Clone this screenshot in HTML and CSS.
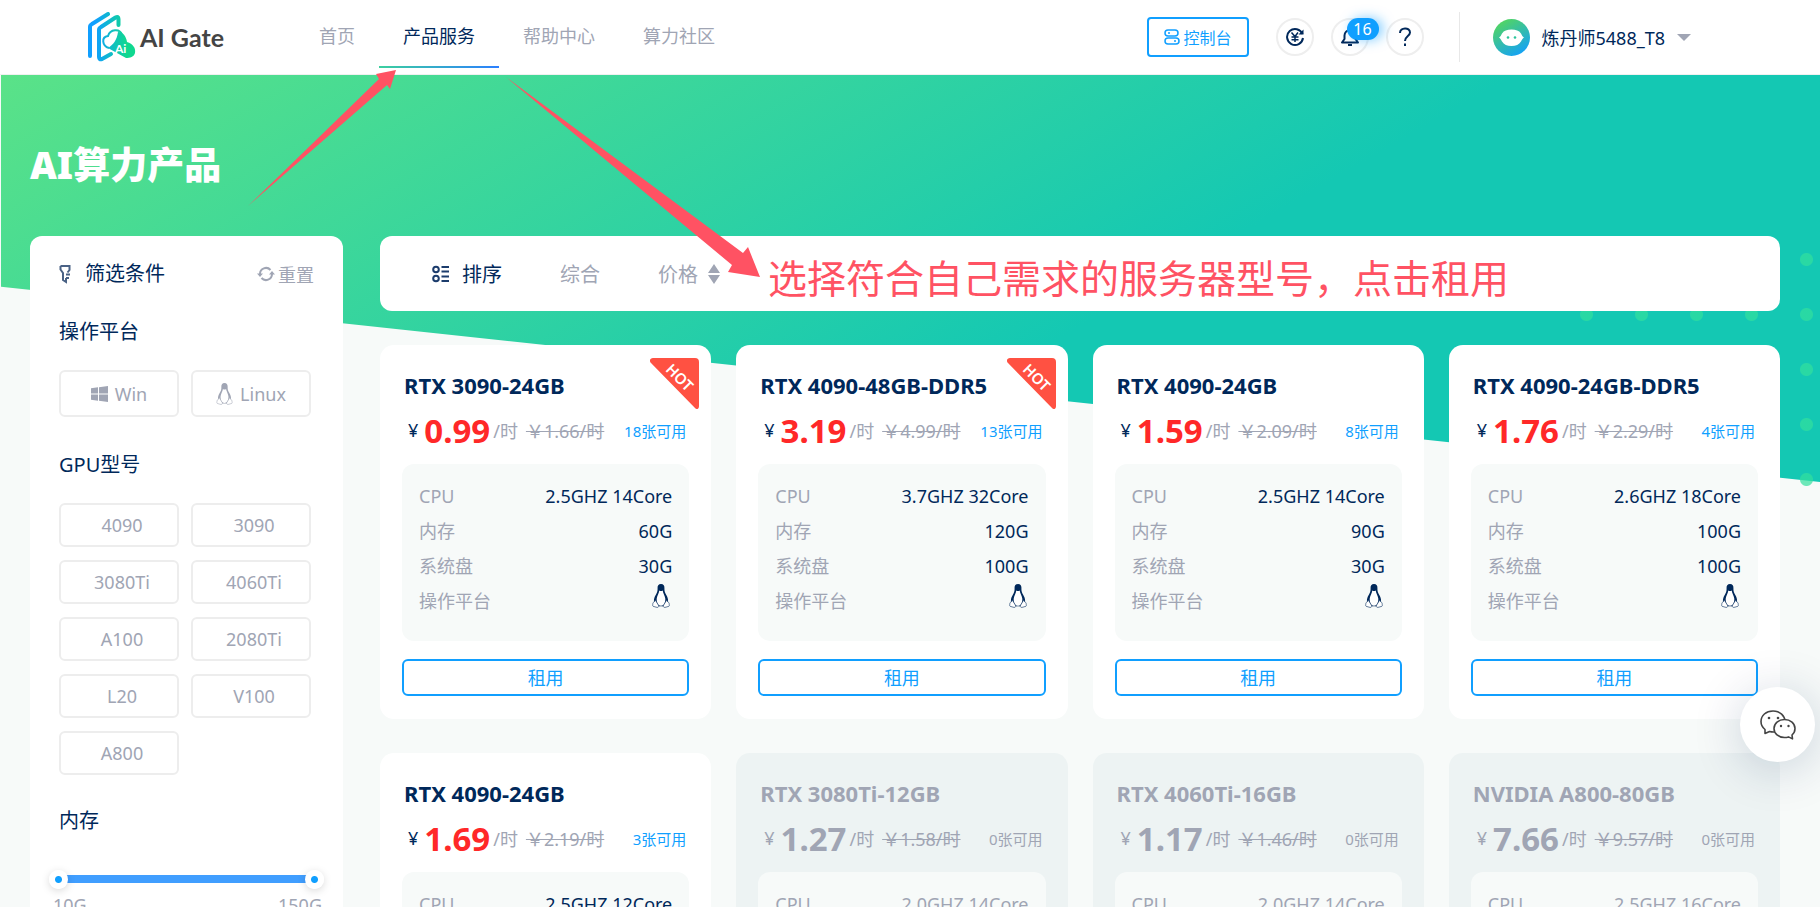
FILE: index.html
```html
<!DOCTYPE html>
<html lang="zh-CN">
<head>
  <meta charset="UTF-8">
  <title>AI Gate</title>
  <link rel="stylesheet" href="styles.css">
</head>
<body>
  <!-- icons -->
  <svg class="sprite" aria-hidden="true">
    <symbol id="tux" viewBox="0 0 20 28">
      <path fill="currentColor" d="M10 0c-3 0-4.200 2.200-4 5 .1 3-.3 4.500-2 7.500-1.500 2.500-2.500 5-2.200 8L4 23l3 3h6l3-3 2.200-2.500c.3-3-.7-5.500-2.200-8-1.700-3-2.100-4.500-2-7.500.2-2.800-1-5-4-5z"/>
      <path fill="#fff" d="M8 7.500c1 1 3 1 4 0 .3 3 2.600 6 3 9.500.3 4-1 8.500-5 8.500S4.700 21 5 17c.4-3.500 2.700-6.500 3-9.500z"/>
      <path fill="#fff" stroke="currentColor" stroke-width=".7" d="M3.200 18.500l4 6.500c.8 2-1.200 2.800-3 2L.8 26c-1-.6-.3-2-.3-3.200 0-1.800 1.700-1.300 1.900-2.500zM16.800 18.500l-4 6.500c-.8 2 1.200 2.800 3 2l3.400-1c1-.6.3-2 .3-3.200 0-1.800-1.700-1.300-1.900-2.500z"/>
    </symbol>
  </svg>

  <header class="header">
    <a class="logo" href="#">
      <svg width="48" height="50" viewBox="0 0 48 50" fill="none">
        <defs>
          <linearGradient id="lg" x1="0" y1="0" x2="48" y2="0" gradientUnits="userSpaceOnUse">
            <stop offset=".15" stop-color="#109fff"/>
            <stop offset=".8" stop-color="#10d890"/>
          </linearGradient>
        </defs>
        <g stroke="url(#lg)" stroke-width="4" stroke-linecap="round" stroke-linejoin="round">
          <path d="M2 44V15q0-2 2-3L20 2"/>
          <path d="M30.500 13V7q0-3-3-1.500L13 15q-2 1-2 3v27q0 3 3 2l9-5"/>
        </g>
        <path fill="url(#lg)" d="M30 20c5 0 8 4 9 10 6 2 9 6 8 11-1 4-5 5-9 5L20 36c5-3 9-8 10-16z"/>
        <path stroke="url(#lg)" stroke-width="2" d="M21 36c-7-2-8-11-1-12 2-7 12-8 14-1"/>
        <text x="27" y="41" class="logo-mark">Ai</text>
      </svg>
      <span class="logo-text">AI Gate</span>
    </a>
    <nav class="nav">
      <a href="#">首页</a>
      <a href="#" class="active">产品服务</a>
      <a href="#">帮助中心</a>
      <a href="#">算力社区</a>
    </nav>
    <div class="tools">
      <button class="console-btn">
        <svg width="16" height="16" viewBox="0 0 16 16" fill="none" stroke="currentColor" stroke-width="1.500">
          <rect x="1" y="1" width="13" height="6" rx="3"/>
          <rect x="1" y="9" width="14" height="6" rx="3"/>
          <path d="M4 4h2M10 12h2"/>
        </svg>
        控制台
      </button>
      <button class="round-btn" aria-label="充值">
        <svg width="20" height="20" viewBox="0 0 20 20" fill="none" stroke="currentColor" stroke-width="2">
          <path d="M17.500 7A8 8 0 1 0 18 11"/>
          <path d="M13.500 7.500h5V2.500z" fill="currentColor" stroke="none"/>
          <path d="M6.500 5.500L10 9.500l3-4M10 9.500V15M6.500 10h7M6.500 12.700h7" stroke-width="1.500"/>
        </svg>
      </button>
      <button class="round-btn" aria-label="消息">
        <svg width="20" height="20" viewBox="0 0 20 20" fill="none" stroke="currentColor" stroke-width="2">
          <path d="M2 15.500h16l-2.500-3.500V8.500a5.500 5.500 0 0 0-11 0V12z" stroke-linejoin="round"/>
          <path d="M8 18h4M10 1v2"/>
        </svg>
        <span class="badge">16</span>
      </button>
      <button class="round-btn" aria-label="帮助">
        <svg width="14" height="20" viewBox="0 0 14 20" fill="none" stroke="currentColor" stroke-width="2">
          <path d="M2 6c0-6 10-6 10-.5C12 9 7 9 7 14"/>
          <path d="M7 16.500v2.500"/>
        </svg>
      </button>
    </div>
    <div class="user">
      <svg width="37" height="37" viewBox="0 0 37 37">
        <defs>
          <linearGradient id="av" x1=".2" y1="0" x2=".8" y2="1">
            <stop offset="0" stop-color="#55d85a"/>
            <stop offset="1" stop-color="#109fff"/>
          </linearGradient>
        </defs>
        <circle cx="18.500" cy="18.500" r="18.500" fill="url(#av)"/>
        <path fill="#fff" d="M6 18.500c1.500-1 2-2 3-4 2-3 5-4 9.500-4s7.500 1 9.500 4c1 2 1.500 3 3 4-1.500 1-2 2-3 4-2 3-5 4.500-9.500 4.500S11 25.500 9 22.500c-1-2-1.500-3-3-4z"/>
        <circle cx="15" cy="18.500" r="1.300" fill="#2bc59b"/>
        <circle cx="22" cy="18.500" r="1.300" fill="#2bc59b"/>
      </svg>
      <span>炼丹师5488_T8</span>
      <i class="caret"></i>
    </div>
  </header>

  <div class="hero"></div>
  <div class="dots"></div>

  <main class="page">
    <h1>AI算力产品</h1>
    <div class="columns">
      <aside class="filter">
        <div class="filter-head">
          <svg width="12" height="20" viewBox="0 0 12 20" fill="none" stroke="#4a6285" stroke-width="2">
            <path d="M1.500 2h9v4L8.500 8.500M1.500 2v3.500L4 9v7l3 2v-4M7 10.500h4M7 14h3"/>
          </svg>
          <h2>筛选条件</h2>
          <button class="reset">
            <svg width="18" height="16" viewBox="0 0 18 16" fill="none" stroke="currentColor" stroke-width="2">
              <path d="M3 8a6 6 0 0 1 10.500-4M15 8a6 6 0 0 1-10.500 4"/>
              <path d="M0 7.500h6L3 11zM12 8.500h6L15 5z" fill="currentColor" stroke="none"/>
            </svg>
            重置
          </button>
        </div>

        <h3>操作平台</h3>
        <div class="options platform">
          <button>
            <svg width="17" height="16" viewBox="0 0 17 16" fill="currentColor"><path d="M0 2.300L7 1.300V7.500H0zM8 1.200L17 0v7.500H8zM0 8.500h7v6.200L0 13.700zM8 8.500h9V16l-9-1.200z"/></svg>
            Win
          </button>
          <button>
            <svg width="17" height="22"><use href="#tux"/></svg>
            Linux
          </button>
        </div>

        <h3>GPU型号</h3>
        <div class="options gpu">
          <button>4090</button>
          <button>3090</button>
          <button>3080Ti</button>
          <button>4060Ti</button>
          <button>A100</button>
          <button>2080Ti</button>
          <button>L20</button>
          <button>V100</button>
          <button>A800</button>
        </div>

        <h3>内存</h3>
        <div class="slider">
          <input type="range" min="10" max="150" value="10" aria-label="最小内存">
          <input type="range" min="10" max="150" value="150" aria-label="最大内存">
        </div>
        <div class="slider-labels"><span>10G</span><span>150G</span></div>
      </aside>

      <section class="content">
        <div class="sort">
          <svg width="18" height="18" viewBox="0 0 18 18" fill="none" stroke="#1c3c6c" stroke-width="2">
            <circle cx="4" cy="4.500" r="2.800"/>
            <circle cx="4" cy="13.500" r="2.800"/>
            <path d="M9.500 2H17M9.500 6.500H17M9.500 11.500H17M9.500 16H17"/>
          </svg>
          <span class="sort-title">排序</span>
          <button>综合</button>
          <button>
            价格
            <svg width="14" height="20" viewBox="0 0 14 20" fill="currentColor"><path d="M7 0l6 9H1zM7 20l6-9H1z"/></svg>
          </button>
        </div>

        <div class="cards">
          <article class="card">
            <svg class="hot" width="49" height="51" viewBox="0 0 49 51">
              <path d="M3 0h42a4 4 0 0 1 4 4v44c0 3-2 4-4 2L1 5C-1 3 0 0 3 0z"/>
              <text x="30" y="25" transform="rotate(45 30 19)" text-anchor="middle">HOT</text>
            </svg>
            <h2>RTX 3090-24GB</h2>
            <p class="price"><span class="yen">¥</span><b>0.99</b><span class="unit">/时</span><del>￥1.66/时</del><span class="left">18张可用</span></p>
            <dl>
              <div><dt>CPU</dt><dd>2.5GHZ 14Core</dd></div>
              <div><dt>内存</dt><dd>60G</dd></div>
              <div><dt>系统盘</dt><dd>30G</dd></div>
              <div><dt>操作平台</dt><dd><svg width="22" height="24"><use href="#tux"/></svg></dd></div>
            </dl>
            <button class="rent">租用</button>
          </article>

          <article class="card">
            <svg class="hot" width="49" height="51" viewBox="0 0 49 51">
              <path d="M3 0h42a4 4 0 0 1 4 4v44c0 3-2 4-4 2L1 5C-1 3 0 0 3 0z"/>
              <text x="30" y="25" transform="rotate(45 30 19)" text-anchor="middle">HOT</text>
            </svg>
            <h2>RTX 4090-48GB-DDR5</h2>
            <p class="price"><span class="yen">¥</span><b>3.19</b><span class="unit">/时</span><del>￥4.99/时</del><span class="left">13张可用</span></p>
            <dl>
              <div><dt>CPU</dt><dd>3.7GHZ 32Core</dd></div>
              <div><dt>内存</dt><dd>120G</dd></div>
              <div><dt>系统盘</dt><dd>100G</dd></div>
              <div><dt>操作平台</dt><dd><svg width="22" height="24"><use href="#tux"/></svg></dd></div>
            </dl>
            <button class="rent">租用</button>
          </article>

          <article class="card">
            <h2>RTX 4090-24GB</h2>
            <p class="price"><span class="yen">¥</span><b>1.59</b><span class="unit">/时</span><del>￥2.09/时</del><span class="left">8张可用</span></p>
            <dl>
              <div><dt>CPU</dt><dd>2.5GHZ 14Core</dd></div>
              <div><dt>内存</dt><dd>90G</dd></div>
              <div><dt>系统盘</dt><dd>30G</dd></div>
              <div><dt>操作平台</dt><dd><svg width="22" height="24"><use href="#tux"/></svg></dd></div>
            </dl>
            <button class="rent">租用</button>
          </article>

          <article class="card">
            <h2>RTX 4090-24GB-DDR5</h2>
            <p class="price"><span class="yen">¥</span><b>1.76</b><span class="unit">/时</span><del>￥2.29/时</del><span class="left">4张可用</span></p>
            <dl>
              <div><dt>CPU</dt><dd>2.6GHZ 18Core</dd></div>
              <div><dt>内存</dt><dd>100G</dd></div>
              <div><dt>系统盘</dt><dd>100G</dd></div>
              <div><dt>操作平台</dt><dd><svg width="22" height="24"><use href="#tux"/></svg></dd></div>
            </dl>
            <button class="rent">租用</button>
          </article>

          <article class="card">
            <h2>RTX 4090-24GB</h2>
            <p class="price"><span class="yen">¥</span><b>1.69</b><span class="unit">/时</span><del>￥2.19/时</del><span class="left">3张可用</span></p>
            <dl>
              <div><dt>CPU</dt><dd>2.5GHZ 12Core</dd></div>
            </dl>
          </article>

          <article class="card sold-out">
            <h2>RTX 3080Ti-12GB</h2>
            <p class="price"><span class="yen">¥</span><b>1.27</b><span class="unit">/时</span><del>￥1.58/时</del><span class="left">0张可用</span></p>
            <dl>
              <div><dt>CPU</dt><dd>2.0GHZ 14Core</dd></div>
            </dl>
          </article>

          <article class="card sold-out">
            <h2>RTX 4060Ti-16GB</h2>
            <p class="price"><span class="yen">¥</span><b>1.17</b><span class="unit">/时</span><del>￥1.46/时</del><span class="left">0张可用</span></p>
            <dl>
              <div><dt>CPU</dt><dd>2.0GHZ 14Core</dd></div>
            </dl>
          </article>

          <article class="card sold-out">
            <h2>NVIDIA A800-80GB</h2>
            <p class="price"><span class="yen">¥</span><b>7.66</b><span class="unit">/时</span><del>￥9.57/时</del><span class="left">0张可用</span></p>
            <dl>
              <div><dt>CPU</dt><dd>2.5GHZ 16Core</dd></div>
            </dl>
          </article>
        </div>
      </section>
    </div>
  </main>

  <!-- red notes on top of the page -->
  <svg class="arrows" width="800" height="300" viewBox="0 0 800 300" fill="#ff5263" aria-hidden="true">
    <path d="M248 206L379 79L376 74L396 70L390 89L387 85z"/>
    <path d="M506 77L743 253L748 247L760 277L728 272L732 265z"/>
  </svg>
  <p class="note">选择符合自己需求的服务器型号，点击租用</p>

  <button class="chat" aria-label="微信客服">
    <svg width="36" height="30" viewBox="0 0 36 30" fill="#fff" stroke="#444" stroke-width="1.600" stroke-linejoin="round">
      <path d="M13 1C6 1 1 5.500 1 11.500c0 3.500 1.500 6 4 8L5 23.500l4.500-2c1.200.3 2.500.5 4 .5 7 0 11.500-5 11.500-10.500S20 1 13 1z"/>
      <path d="M24.500 9.500c-6 0-10.500 4-10.500 9s4.500 9 10.500 9c1.500 0 2.700-.2 4-.6l4 2-.5-3.900c2-1.700 3-4 3-6.500 0-5-4.500-9-10.500-9z"/>
      <g fill="#444" stroke="none">
        <circle cx="9" cy="8" r="1.300"/>
        <circle cx="18" cy="8" r="1.300"/>
        <circle cx="21" cy="16" r="1.200"/>
        <circle cx="28.500" cy="16" r="1.200"/>
      </g>
    </svg>
  </button>
</body>
</html>
```
FILE: styles.css
```css
* {
  box-sizing: border-box;
}

body {
  margin: 0;
  height: 100vh;
  overflow: hidden;
  position: relative;
  background: #f7faf9;
  color: #00285a;
  font-family: "Noto Sans", "Noto Sans CJK SC", sans-serif;
  font-size: 18px;
}

h1, h2, h3, p, dl, dd {
  margin: 0;
}

a {
  color: inherit;
  text-decoration: none;
}

button {
  padding: 0;
  border: none;
  background: none;
  color: inherit;
  font: inherit;
  cursor: pointer;
}

.sprite {
  position: absolute;
  width: 0;
  height: 0;
}

/* header */
.header {
  height: 75px;
  display: flex;
  align-items: center;
  padding: 0 129px 0 88px;
  background: #fff;
  border-bottom: 1px solid #f0f0f0;
}

.logo {
  width: 207px;
  display: flex;
  align-items: center;
  gap: 4px;
}

.logo-text {
  font: bold 25px Lato, sans-serif;
  color: #444;
}

.logo-mark {
  font: bold 12px Lato, sans-serif;
  fill: #fff;
}

.nav {
  display: flex;
  align-self: flex-start;
}

.nav a {
  height: 68px;
  padding: 0 24px;
  line-height: 72px;
  color: #a0a5b4;
}

.nav .active {
  color: #00285a;
  background: linear-gradient(90deg, #3cd09f, #2b7fff) bottom / 100% 2px no-repeat;
}

.tools {
  display: flex;
  align-items: center;
  gap: 17px;
  margin-left: auto;
  padding-right: 35px;
}

.console-btn {
  display: flex;
  align-items: center;
  justify-content: center;
  gap: 4px;
  width: 102px;
  height: 40px;
  margin-right: 10px;
  border: 2px solid #109fff;
  border-radius: 4px;
  color: #109fff;
  font-size: 16px;
}

.round-btn {
  display: flex;
  align-items: center;
  justify-content: center;
  position: relative;
  width: 38px;
  height: 38px;
  border: 2px solid #eee;
  border-radius: 50%;
}

.badge {
  position: absolute;
  z-index: 1;
  top: -2px;
  left: 14px;
  width: 32px;
  height: 22px;
  border-radius: 11px;
  background: #109fff;
  box-shadow: 4px 0 12px rgba(16, 159, 255, 0.5);
  color: #fff;
  font-size: 16px;
  line-height: 22px;
}

.user {
  display: flex;
  align-items: center;
  gap: 12px;
  height: 50px;
  padding-left: 33px;
  border-left: 1px solid #e8e8e8;
}

.caret {
  border: 7px solid transparent;
  border-top-color: #a0a5b4;
  border-bottom: none;
}

/* slanted banner */
.hero {
  position: absolute;
  top: 75px;
  left: 1px;
  right: 0;
  height: 407px;
  background: linear-gradient(150deg, #5ae288, #14c8b3 60%);
  clip-path: polygon(0 0, 100% 0, 100% 100%, 0 52%);
}

.dots {
  position: absolute;
  top: 232px;
  right: -14px;
  width: 275px;
  height: 275px;
  background: radial-gradient(circle, rgba(50, 223, 158, 0.7) 6px, transparent 7px) 0 0 / 55px 55px;
}

.page {
  position: relative;
  padding: 59px 40px 0 30px;
}

h1 {
  height: 102px;
  color: #fff;
  font-size: 37px;
  font-weight: 900;
  line-height: 62px;
}

.columns {
  display: flex;
  align-items: flex-start;
  gap: 37px;
}

/* filters */
.filter {
  flex: 0 0 313px;
  padding: 20px 29px 60px;
  border-radius: 12px;
  background: #fff;
}

.filter-head {
  display: flex;
  align-items: center;
  height: 36px;
}

.filter-head h2,
.filter h3 {
  font-size: 20px;
  font-weight: 400;
  line-height: 36px;
}

.filter-head h2 {
  padding-left: 14px;
}

.reset {
  display: flex;
  align-items: center;
  gap: 3px;
  margin-left: auto;
  color: #a0a5b4;
}

.filter h3 {
  margin: 22px 0 20px;
}

.options {
  display: grid;
  grid-template-columns: 120px 120px;
  gap: 13px 12px;
}

.options button {
  display: flex;
  align-items: center;
  justify-content: center;
  gap: 7px;
  height: 44px;
  border: 2px solid #ededed;
  border-radius: 6px;
  color: #a0a5b4;
}

.platform button {
  height: 47px;
}

.gpu button {
  padding-left: 6px;
}

.filter .platform + h3 {
  margin-top: 30px;
}

.filter .gpu + h3 {
  margin-top: 28px;
}

.slider {
  position: relative;
  height: 20px;
  margin: 30px -10px 0;
}

.slider::before {
  content: "";
  position: absolute;
  top: 6px;
  left: 10px;
  right: 10px;
  height: 8px;
  background: #409eff;
}

.slider input {
  appearance: none;
  position: absolute;
  top: 0;
  left: 0;
  width: 100%;
  height: 20px;
  margin: 0;
  background: none;
  pointer-events: none;
}

.slider input::-webkit-slider-thumb {
  appearance: none;
  width: 19px;
  height: 19px;
  border-radius: 50%;
  background: radial-gradient(circle, #109fff 3px, #fff 4px);
  box-shadow: 0 2px 8px rgba(0, 0, 0, 0.15);
  pointer-events: auto;
}

.slider-labels {
  display: flex;
  justify-content: space-between;
  margin: 4px -8px 0 -6px;
  color: #a0a5b4;
}

/* sort bar */
.content {
  flex: 1;
  min-width: 0;
}

.sort {
  display: flex;
  align-items: center;
  height: 75px;
  padding-left: 52px;
  border-radius: 12px;
  background: #fff;
  font-size: 20px;
}

.sort-title {
  padding-left: 12px;
}

.sort button {
  display: flex;
  align-items: center;
  gap: 9px;
  margin-left: 58px;
  color: #a0a5b4;
}

/* product cards */
.cards {
  display: grid;
  grid-template-columns: repeat(4, 1fr);
  gap: 34px 25px;
  margin-top: 34px;
}

.card {
  position: relative;
  height: 374px;
  padding: 25px 22px 0;
  border-radius: 14px;
  background: #fff;
}

.card h2 {
  padding-left: 2px;
  font-size: 22px;
  font-weight: 700;
  line-height: 30px;
}

.hot {
  position: absolute;
  top: 13px;
  right: 12px;
  fill: #ff5142;
}

.hot text {
  font: 600 15px "Noto Sans", sans-serif;
  fill: #fff;
}

.price {
  display: flex;
  align-items: center;
  height: 34px;
  margin: 13px 0 17px;
  padding: 0 3px 0 6px;
  color: #a0a5b4;
}

.price b {
  margin: 0 3px 0 6px;
  color: #ff2828;
  font-size: 33px;
  font-weight: 700;
}

.yen {
  color: #00285a;
}

.price del {
  margin-left: 8px;
}

.left {
  margin-left: auto;
  color: #109fff;
  font-size: 15px;
}

.card dl {
  min-height: 177px;
  padding: 15px 17px;
  border-radius: 12px;
  background: #f7faf9;
  line-height: 35px;
}

.card dl div {
  display: flex;
  justify-content: space-between;
  height: 35px;
}

.card dt {
  color: #a0a5b4;
}

.rent {
  width: 100%;
  height: 37px;
  margin-top: 18px;
  border: 2px solid #109fff;
  border-radius: 6px;
  color: #109fff;
  line-height: 30px;
}

.sold-out {
  background: #edf3f3;
}

.sold-out h2,
.sold-out dd,
.sold-out .yen,
.sold-out b,
.sold-out .left {
  color: #a0a5b4;
}

/* red notes */
.arrows {
  position: absolute;
  top: 0;
  left: 0;
  pointer-events: none;
}

.note {
  position: absolute;
  top: 248px;
  left: 768px;
  color: #ff5263;
  font-size: 39px;
  line-height: 60px;
  white-space: nowrap;
}

.chat {
  position: fixed;
  right: 5px;
  bottom: 145px;
  display: flex;
  align-items: center;
  justify-content: center;
  width: 75px;
  height: 75px;
  border-radius: 50%;
  background: #fff;
  box-shadow: 0 6px 50px rgba(0, 40, 90, 0.2);
}
```
